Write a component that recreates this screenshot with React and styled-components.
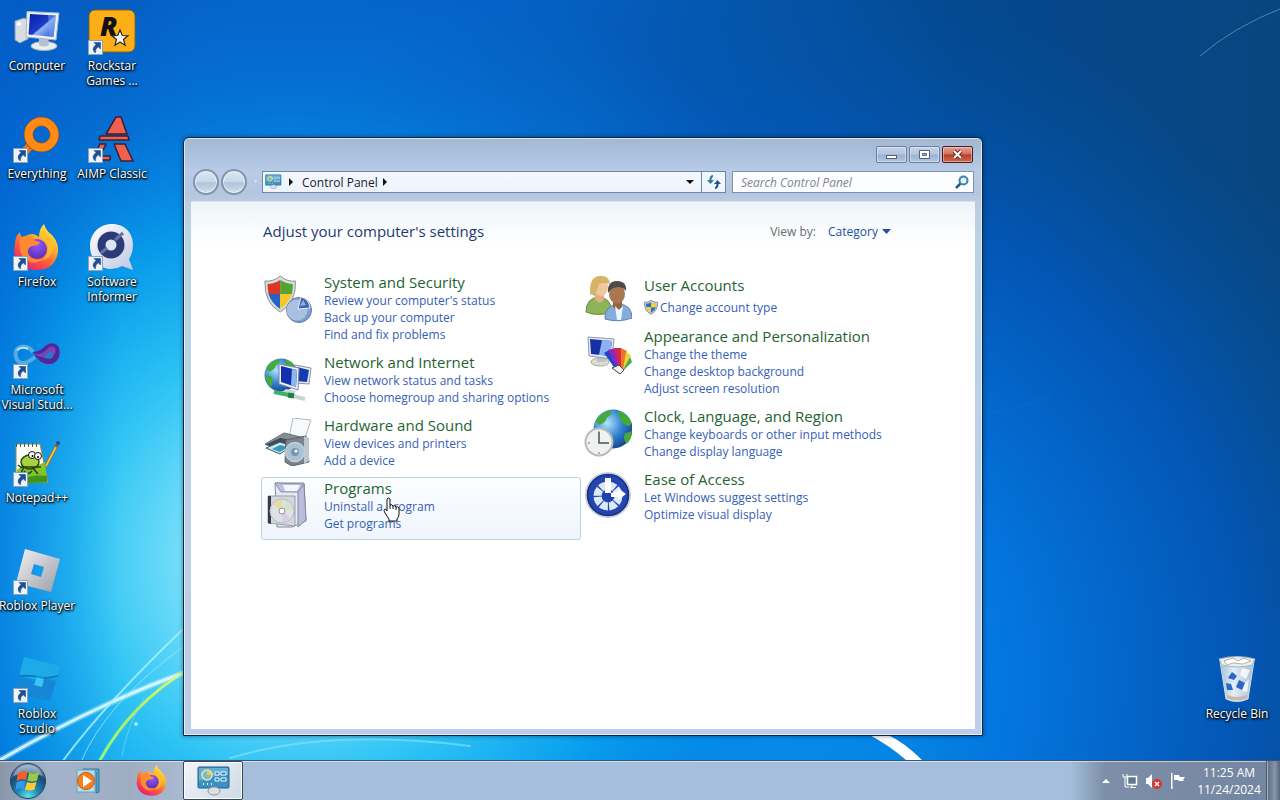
import React, { useState } from 'react';
import styled, { createGlobalStyle, css } from 'styled-components';

const GlobalStyle = createGlobalStyle`
    * {
        box-sizing: border-box;
    }
    body {
        margin: 0;
        font-family: 'Open Sans', 'Noto Sans', sans-serif;
        font-size: 12px;
        line-height: 17px;
    }
    button, input, select {
        font: inherit;
        color: inherit;
        margin: 0;
        padding: 0;
        border: 0;
        background: none;
    }
    a {
        color: inherit;
        text-decoration: none;
    }
`;

/* ---------- desktop ---------- */

const Screen = styled.div`
    min-height: 100vh;
    display: flex;
    flex-direction: column;
    background: #0563cb;
`;

const Desktop = styled.main`
    position: relative;
    flex: 1;
    display: flex;
    justify-content: space-between;
    overflow: hidden;
`;

const Wallpaper = styled.svg`
    position: absolute;
    inset: 0;
    width: 100%;
    height: 100%;
`;

const IconGrid = styled.div`
    position: relative;
    display: grid;
    grid-auto-flow: column;
    grid-template-rows: repeat(7, 108px);
    grid-auto-columns: 74px;
    column-gap: 1px;
    padding-right: ${(p) => (p.$end ? '6px' : '0')};
`;

const Shortcut = styled.button`
    display: flex;
    flex-direction: column;
    align-items: center;
    gap: 2px;
    padding-top: 8px;
    ${(p) => p.$last && css`grid-row: 7;`}
`;

const ShortcutPicture = styled.span`
    position: relative;
    width: 48px;
    height: 48px;
    svg {
        display: block;
    }
`;

const ArrowBadge = styled.svg`
    position: absolute;
    left: 0;
    bottom: 0;
`;

const ShortcutLabel = styled.span`
    color: #fff;
    line-height: 15px;
    white-space: pre;
    text-align: center;
    text-shadow: 0 1px 2px #000, 1px 1px 2px #000, 0 0 3px rgba(0, 0, 0, 0.6);
`;

/* ---------- window ---------- */

const Window = styled.section`
    position: absolute;
    inset: 137px 297px 24px 183px;
    display: flex;
    flex-direction: column;
    padding: 0 7px 6px;
    border: 1px solid #10263f;
    border-radius: 6px 6px 0 0;
    background: linear-gradient(#a3b8d2, #a8c0dc 14px, #b9cbe6 34px, #b3c6e0 56px, #bccce4 64px, #b9d3e6 100px, #bccdea);
    box-shadow: inset 0 0 0 1px rgba(255, 255, 255, 0.65), 0 0 4px rgba(0, 20, 60, 0.5);
`;

const TitleBar = styled.header`
    display: flex;
    justify-content: flex-end;
    gap: 2px;
    height: 33px;
    padding: 8px 2px 0 0;
`;

const CaptionButton = styled.button`
    display: grid;
    place-items: center;
    width: 31px;
    height: 17px;
    border: 1px solid ${(p) => (p.$close ? '#4a1a20' : '#6b7f9e')};
    border-radius: 2px;
    background: ${(p) => (p.$close
        ? 'linear-gradient(#e3a293, #d0705c 48%, #b93a25 52%, #d4694e)'
        : 'linear-gradient(#c3d3e8, #b4c7e0 48%, #9cb1ce 52%, #b3c7e2)')};
    box-shadow: inset 0 0 0 1px rgba(255, 255, 255, 0.4);
`;

const NavRow = styled.div`
    display: flex;
    align-items: center;
    height: 22px;
    margin-bottom: 8px;
    padding: 0 1px 0 2px;
`;

const History = styled.div`
    display: flex;
    align-items: center;
    gap: 2px;
    width: 69px;
`;

const RoundButton = styled.button`
    width: 26px;
    height: 26px;
    border: 2px solid #8193ad;
    border-radius: 50%;
    background: linear-gradient(#dbe7f2, #c9d8e8 48%, #b1c4d9 54%, #cfdfee);
    box-shadow: inset 0 0 0 1px rgba(255, 255, 255, 0.6);
`;

const RecentPages = styled.button`
    display: grid;
    place-items: center;
    width: 12px;
    height: 12px;
`;

const AddressBar = styled.nav`
    flex: 1;
    display: flex;
    align-items: stretch;
    height: 22px;
    margin-right: 6px;
    border: 1px solid #6f88a6;
    background: linear-gradient(#f2f9fd, #eef3fb);
    color: #1c1c2c;
`;

const AddressButton = styled.button`
    display: grid;
    place-items: center;
    width: ${(p) => p.$width || 16}px;
    ${(p) => p.$divided && css`border-left: 1px solid #6f88a6;`}
`;

const Crumb = styled.a`
    display: flex;
    align-items: center;
    padding: 0 2px 0 3px;
`;

const Spacer = styled.span`
    flex: 1;
`;

const SearchBox = styled.form`
    display: flex;
    align-items: center;
    width: 242px;
    height: 22px;
    padding: 0 4px 0 8px;
    border: 1px solid #7c92ae;
    background: #fcfdff;
    input {
        flex: 1;
        min-width: 0;
        outline: 0;
        color: #333;
    }
    input::placeholder {
        color: #858589;
        font-style: italic;
        opacity: 1;
    }
    button {
        display: grid;
    }
`;

const Client = styled.div`
    flex: 1;
    overflow: auto;
    padding: 19px 20px 20px 70px;
    border-top: 1px solid #d6e2ee;
    background: linear-gradient(#edf5f9, #fff 42px);
`;

const ClientHeader = styled.div`
    display: flex;
    justify-content: space-between;
    align-items: center;
    max-width: 640px;
    margin-bottom: 30px;
    padding: 0 10px 0 2px;
`;

const PageTitle = styled.h1`
    margin: 0;
    font-size: 15px;
    font-weight: 400;
    line-height: 20px;
    color: #1f3a73;
`;

const ViewBy = styled.div`
    display: flex;
    align-items: center;
    color: #6d6d6d;
    select {
        appearance: none;
        margin-left: 12px;
        color: #1f4fa8;
        outline: 0;
    }
    svg {
        margin-left: 4px;
    }
`;

const Columns = styled.div`
    display: grid;
    grid-template-columns: repeat(2, minmax(0, 320px));
    align-items: start;
`;

const CategoryBox = styled.article`
    display: flex;
    gap: 12px;
    padding: 0 2px ${(p) => (p.$single ? 5 : 7)}px;
    border: 1px solid ${(p) => (p.$active ? '#b9d2dd' : 'transparent')};
    border-radius: 3px;
    background: ${(p) => (p.$active ? 'linear-gradient(#fcfeff, #eff5fc)' : 'none')};
`;

const CategoryIcon = styled.svg`
    flex: none;
    width: 48px;
    height: 48px;
    margin-top: 3px;
    margin-bottom: -5px;
`;

const CategoryText = styled.div`
    padding-top: ${(p) => (p.$single ? 3 : 0)}px;
    h2 {
        margin: 0;
        font-size: 15px;
        font-weight: 400;
        line-height: 20px;
        color: #1e6430;
    }
    ul {
        margin: 0;
        padding: 0;
        list-style: none;
        color: #3560b8;
    }
    li {
        display: flex;
        align-items: center;
        gap: 2px;
        height: ${(p) => (p.$single ? 24 : 17)}px;
        white-space: nowrap;
    }
`;

const Pointer = styled.svg`
    position: absolute;
    left: 383px;
    top: 497px;
    pointer-events: none;
`;

/* ---------- taskbar ---------- */

const Taskbar = styled.footer`
    position: relative;
    display: flex;
    align-items: stretch;
    height: 40px;
    border-top: 1px solid #35557a;
    background: linear-gradient(90deg, #8996aa, #a3b4ca 50px, #9fadc3 130px, #a8b9d0 180px, #a5bfdd 260px, #a4bedb calc(100% - 210px), #7c8ea8 calc(100% - 175px), #7385a0);
    box-shadow: inset 0 1px 0 rgba(255, 255, 255, 0.55);
`;

const TaskButton = styled.button`
    display: grid;
    place-items: center;
    width: ${(p) => p.$width || 63}px;
    ${(p) => p.$active && css`
        width: 60px;
        border: 1px solid #33475f;
        border-radius: 2px;
        background: linear-gradient(135deg, #f2f5f8, #cdd9e6);
        box-shadow: inset 0 0 0 1px #fff;
    `}
`;

const Tray = styled.div`
    display: flex;
    align-items: center;
    gap: 8px;
    margin-left: auto;
    button {
        display: grid;
        place-items: center;
        width: 16px;
    }
`;

const Clock = styled.time`
    width: 70px;
    color: #fff;
    text-align: center;
    white-space: pre;
`;

const ShowDesktop = styled.button`
    width: 14px;
    margin-left: 2px;
    border-left: 1px solid #4c5a6e;
    background: linear-gradient(90deg, #5d6b80, #8795a9 60%, #56657a);
    box-shadow: inset 1px 0 0 rgba(255, 255, 255, 0.45);
`;

/* ---------- drawings ---------- */

const Background = () => (
    <Wallpaper viewBox="0 0 1280 760" preserveAspectRatio="none" aria-hidden="true">
        <defs>
            <linearGradient id="sky" x1="0" y1="0" x2="1" y2="0">
                <stop offset="0" stopColor="#064fb4" />
                <stop offset=".15" stopColor="#0560c6" />
                <stop offset=".45" stopColor="#0560c4" />
                <stop offset=".75" stopColor="#04488f" />
                <stop offset="1" stopColor="#08467f" />
            </linearGradient>
            <radialGradient id="glow" gradientUnits="userSpaceOnUse" cx="300" cy="560" r="620">
                <stop offset="0" stopColor="#b5f2fc" />
                <stop offset=".2" stopColor="#6fdcf8" />
                <stop offset=".35" stopColor="#2fc4f5" />
                <stop offset=".55" stopColor="#08a0ee" stopOpacity=".92" />
                <stop offset=".75" stopColor="#0480e2" stopOpacity=".55" />
                <stop offset="1" stopColor="#0570d8" stopOpacity="0" />
            </radialGradient>
            <radialGradient id="mid" gradientUnits="userSpaceOnUse" cx="740" cy="680" r="720">
                <stop offset="0" stopColor="#079df2" />
                <stop offset=".4" stopColor="#0376e0" stopOpacity=".95" />
                <stop offset=".7" stopColor="#0359bd" stopOpacity=".85" />
                <stop offset="1" stopColor="#04529f" stopOpacity="0" />
            </radialGradient>
            <linearGradient id="edge" x1="0" x2="1">
                <stop offset="0" stopColor="#0068d8" stopOpacity=".55" />
                <stop offset="1" stopColor="#0078e0" stopOpacity="0" />
            </linearGradient>
            <linearGradient id="green" x1="0" y1="1" x2="1" y2="0">
                <stop offset="0" stopColor="#8dfa83" />
                <stop offset=".5" stopColor="#b7ee58" />
                <stop offset="1" stopColor="#d9fa9a" />
            </linearGradient>
        </defs>
        <path fill="url(#sky)" d="M0 0h1280v760H0z" />
        <path fill="url(#mid)" d="M0 0h1280v760H0z" />
        <path fill="url(#glow)" d="M0 0h1280v760H0z" />
        <path fill="url(#edge)" d="M0 0h120v760H0z" />
        <g fill="none" strokeLinecap="round">
            <path d="M0 760Q55 728 110 703T200 668" stroke="#b9f2ff" strokeWidth="6" opacity=".4" />
            <path d="M0 760Q55 728 110 703T200 668" stroke="#e8fcff" strokeWidth="3" opacity=".85" />
            <path d="M62 762Q105 704 182 630" stroke="#a9f2ff" strokeWidth="2" opacity=".8" />
            <path d="M81 762Q105 704 184 646" stroke="#9aeafc" strokeWidth="1" opacity=".8" />
            <path d="M99 762Q130 704 190 668" stroke="url(#green)" strokeWidth="3" />
            <path d="M122 756q5-30 22-58" stroke="#7fdcf8" opacity=".6" />
            <path d="M230 758Q330 728 470 746" stroke="#8be4f8" strokeWidth="2" opacity=".6" />
            <path d="M1200 56Q1232 28 1282 8" stroke="#5c93b8" strokeWidth="1" opacity=".8" />
            <path d="M988 414Q1020 410 1050 394" stroke="#118ff0" strokeWidth="2" opacity=".12" />
        </g>
        <path d="M868 734l18 0q18 8 36 26h-16Q890 746 868 734z" fill="#fff" />
        <circle cx="136" cy="724" r="2" fill="#9becff" />
    </Wallpaper>
);

const LinkArrow = () => (
    <ArrowBadge width="16" height="16" viewBox="0 0 16 16">
        <path d="M.5.5h14v14H.5z" fill="#eef4fa" stroke="#8aa4bf" />
        <path d="M6 2.500h6.500v6.500l-2.200-2.200Q7 9 7.400 13 2.500 9.500 8 4.500z" fill="#1c4f96" stroke="#133a75" strokeWidth=".5" />
    </ArrowBadge>
);

const ComputerIcon = () => (
    <svg width="48" height="48" viewBox="0 0 48 48">
        <defs>
            <linearGradient id="pcScreen" x1="0" x2="1" y1="0" y2="1">
                <stop offset="0" stopColor="#0a1cab" />
                <stop offset=".5" stopColor="#1c3cc4" />
                <stop offset=".55" stopColor="#8eb5f4" />
                <stop offset="1" stopColor="#2148cd" />
            </linearGradient>
        </defs>
        <path d="M2 13l9-3 4 2v19l-8 4-5-3z" fill="#d7dde3" stroke="#8b97a8" />
        <path d="M4 15l4-1v3l-4 1z" fill="#fff" />
        <ellipse cx="31" cy="38" rx="13" ry="4.500" fill="#e8edf0" stroke="#a2adb8" />
        <path d="M26 28h9l1 9q-5 3-10 0z" fill="#b5c1cc" />
        <path d="M14 3.500l32 1.500-3 27-30-3z" fill="#eef2f5" stroke="#a4b4c6" />
        <path d="M17 6l26 1.500-2.500 21.500-25-2.500z" fill="url(#pcScreen)" />
        <path d="M35 7l8 .5-2.500 21.500-4-.5z" fill="#7ba6f3" opacity=".5" />
    </svg>
);

const RockstarIcon = () => (
    <svg width="48" height="48" viewBox="0 0 48 48">
        <rect x="1" y="2" width="46" height="42" rx="6" fill="#fcaf17" stroke="#8a640e" />
        <text x="12" y="28" fontFamily="Open Sans, sans-serif" fontWeight="800" fontStyle="italic" fontSize="27" fill="#111">R</text>
        <path d="M32 22l2.200 5.500 5.800.3-4.500 3.700 1.600 5.700-5.100-3.200-5 3.200 1.500-5.700-4.500-3.700 5.800-.3z" fill="#fff" stroke="#222" strokeWidth="1.200" />
    </svg>
);

const EverythingIcon = () => (
    <svg width="48" height="48" viewBox="0 0 48 48">
        <path d="M17 30l-9 10" stroke="#e8741a" strokeWidth="8" />
        <circle cx="28.500" cy="18.500" r="13" fill="none" stroke="#94561b" strokeWidth="9.500" />
        <circle cx="28.500" cy="18.500" r="13" fill="none" stroke="#ff8a15" strokeWidth="8" />
    </svg>
);

const AimpIcon = () => (
    <svg width="48" height="48" viewBox="0 0 48 48" fill="#f0604f" stroke="#3a1f30" strokeWidth="1.500" strokeLinejoin="round">
        <path d="M28 1h5l6 17H18z" />
        <path d="M12 20h28l1 4H11z" />
        <path d="M26 28h11l8 17H33z" />
        <path d="M12 28h6l-6 12h10v4H4z" />
    </svg>
);

const FirefoxIcon = ({ size = 48, id }) => (
    <svg width={size} height={size} viewBox="0 0 48 48">
        <defs>
            <linearGradient id={`${id}Flame`} x1=".85" y1="0" x2=".2" y2="1">
                <stop offset="0" stopColor="#fff14c" />
                <stop offset=".35" stopColor="#ffb02b" />
                <stop offset=".65" stopColor="#ff5a3c" />
                <stop offset="1" stopColor="#e5147e" />
            </linearGradient>
            <radialGradient id={`${id}Globe`} cx=".5" cy=".3" r=".7">
                <stop offset="0" stopColor="#9059ff" />
                <stop offset="1" stopColor="#5b2fb4" />
            </radialGradient>
        </defs>
        <path d="M2 19Q2 13 7 8q0 4 3 6 4-4 10-4 4 1 6 3 0-8 5-13 2 7 8 11 7 8 6 17-3 18-21 18Q4 46 1 28z" fill={`url(#${id}Flame)`} />
        <circle cx="24" cy="25" r="10" fill={`url(#${id}Globe)`} />
        <path d="M7 14q6-4 12-1 1 4 8 5 0 3-8 4-5 2-4 7 2 8 14 6-8 8-18-1Q5 27 7 14z" fill="#ff8a33" />
        <path d="M28 13q8 4 7 12-1 10-10 12 15-1 15-15 0-9-11-16-3 3-1 7z" fill="#ffc02f" opacity=".8" />
    </svg>
);

const InformerIcon = () => (
    <svg width="48" height="48" viewBox="0 0 48 48">
        <defs>
            <linearGradient id="infoBody" x1="0" y1="0" x2="1" y2="1">
                <stop offset="0" stopColor="#fff" />
                <stop offset="1" stopColor="#bfc9e3" />
            </linearGradient>
        </defs>
        <path d="M24 0C37 0 45 9 45 21q0 8-4 14l4 11-11-4q-5 3-11 3C10 45 2 34 2 22S11 0 24 0z" fill="url(#infoBody)" />
        <circle cx="23" cy="21" r="9.500" fill="#dce5f7" stroke="#2c3a78" strokeWidth="8" />
        <path d="M13 29l6-5M27 16l8-7" stroke="#6273ac" strokeWidth="3" />
    </svg>
);

const VisualStudioIcon = () => (
    <svg width="48" height="48" viewBox="0 0 48 48" fill="none">
        <path d="M20 20Q15 13 8 15q-7 2-5 10 2 7 8 6 5-1 11-6" stroke="#5fb0dc" strokeWidth="4" opacity=".9" />
        <path d="M4 18q5-4 11-1" stroke="#b7e3f3" strokeWidth="2" />
        <path d="M20 20q9-1 12-6 6-5 12-1 4 4 2 12-3 8-12 7-8-1-14-12z" fill="#54249a" />
        <path d="M20 21q7 3 12-2 6-7 10-3 3 7-6 9-8 2-16-4z" fill="#7545b8" />
        <path d="M31 26q3-7 8-6 4 5-2 7z" fill="#2b78c8" />
    </svg>
);

const NotepadIcon = () => (
    <svg width="48" height="48" viewBox="0 0 48 48">
        <path d="M3 4h24l8 38-32 2z" fill="#fbfdf5" stroke="#84924f" />
        <path d="M4 30q9-8 17-3l11-5 2 20-31 2z" fill="#83c32b" />
        <path d="M7 41q11-7 27-5v6L7 44z" fill="#3f951d" />
        <path d="M3 5h24" stroke="#4d5a60" strokeWidth="4" strokeDasharray="1 3" />
        <ellipse cx="17" cy="22" rx="9" ry="7" fill="#a7d13d" stroke="#2c4910" strokeWidth="1.500" />
        <path d="M7 27h21M11 27l-3 6M19 27l6 7M11 31q4 5 8 0M5 25l4 3" stroke="#26400e" strokeWidth="1.500" fill="none" />
        <circle cx="19" cy="15" r="3.500" fill="#fff" stroke="#111" />
        <circle cx="25" cy="16" r="3.500" fill="#fff" stroke="#111" />
        <circle cx="19.500" cy="16" r="1" /><circle cx="25" cy="17" r="1" />
        <path d="M33 26L44 5" stroke="#8a5b10" strokeWidth="3" />
        <path d="M33 26L43 7" stroke="#f9c22e" strokeWidth="2" />
        <circle cx="45" cy="3" r="2" fill="#2e4a8c" />
    </svg>
);

const RobloxIcon = () => (
    <svg width="48" height="48" viewBox="0 0 48 48">
        <defs>
            <linearGradient id="roblox" x1="0" y1="0" x2="1" y2="1">
                <stop offset="0" stopColor="#f4f4f6" />
                <stop offset="1" stopColor="#9a9ca6" />
            </linearGradient>
        </defs>
        <path fillRule="evenodd" fill="url(#roblox)" d="M12 1l35 10-9 33L3 35zM21 16l-3 10 10 3 3-10z" />
    </svg>
);

const StudioIcon = () => (
    <svg width="48" height="48" viewBox="0 0 48 48">
        <path d="M11 1l36 9-3 12-17-2-2 4L6 20z" fill="#1cabe6" />
        <path d="M6 22l20 5 2-5 15 3-6 20L3 37z" fill="#1787d5" />
        <path d="M6 20q20-1 22 3l17-3" stroke="#0b72b8" strokeWidth="1.500" fill="none" />
        <path d="M24 21l7 2-2 8-8-2z" fill="#3cc4f2" />
    </svg>
);

const RecycleIcon = () => (
    <svg width="48" height="48" viewBox="0 0 48 48">
        <defs>
            <linearGradient id="bin" x1="0" x2="1">
                <stop offset="0" stopColor="#aec5dc" />
                <stop offset=".4" stopColor="#f0f6fa" />
                <stop offset="1" stopColor="#b0c2d4" />
            </linearGradient>
        </defs>
        <path d="M7 5h34l-6 38q-11 5-22 0z" fill="url(#bin)" stroke="#dbe6ee" opacity=".95" />
        <path d="M6 3q18-5 36 0l-3 6q-15 4-30 0z" fill="#e9f0f4" stroke="#9fb4c6" />
        <path d="M11 5l9-3 5 3 6-3 7 3-8 3-10-1-6 2z" fill="#fff" stroke="#a58f7c" strokeWidth=".7" />
        <path d="M29 12l8 2-4 9-6-4zM31 28l5-5-2 13-5-1z" fill="#fff" opacity=".8" />
        <path d="M15 22l4-6 5 4-3 4zM26 24l6 3-3 7-6-3zM13 27l5 1 2 6-6 0z" fill="#2d66c9" />
        <path d="M14 39q10 4 20 0v3q-10 5-20 0z" fill="#c9b8a8" />
    </svg>
);

const ShieldPaths = () => (
    <>
        <path d="M18 0Q10 6 1 5q-1 22 17 31Q36 27 35 5 26 6 18 0z" fill="#d4dade" stroke="#888f96" />
        <path d="M18 4Q11 8 4 8q0 5 1 10h13z" fill="#da3626" />
        <path d="M18 4q7 4 14 4 0 5-1 10H18z" fill="#52a42e" />
        <path d="M5 18h13v15Q8 27 5 18z" fill="#2463c4" />
        <path d="M31 18H18v15q10-6 13-15z" fill="#f6c725" />
    </>
);

const SecurityIcon = () => (
    <>
        <g transform="translate(0 1) scale(.9 1)"><ShieldPaths /></g>
        <circle cx="35" cy="35" r="12.500" fill="#7f9dcb" stroke="#5e7aaa" />
        <circle cx="33" cy="35" r="10.500" fill="#a9c1e1" />
        <path d="M34 34l3-12q8 2 9 11z" fill="#3b64b0" stroke="#e5eefa" />
        <path d="M36 31l3-6 3 5z" fill="#8db0e0" />
    </>
);

const Globe = ({ x, y, r, id }) => (
    <g>
        <defs>
            <radialGradient id={id} cx=".35" cy=".35" r=".8">
                <stop offset="0" stopColor="#b3e2fa" />
                <stop offset=".5" stopColor="#2f82cf" />
                <stop offset="1" stopColor="#0d3278" />
            </radialGradient>
        </defs>
        <circle cx={x} cy={y} r={r} fill={`url(#${id})`} />
        <g transform={`translate(${x} ${y}) scale(${r / 20})`} fill="#45aa3c">
            <path d="M-18-8Q-12-18-2-19q2 4-4 7-2 6-8 8zM-19 0q8 0 9 5 0 6-2 10-6-5-7-15z" />
            <path d="M5-19q9 2 14 12-1 6-6 3-7-4-8-15zM19 2q1 9-5 13-4-4-2-10z" />
        </g>
    </g>
);

const NetworkIcon = () => (
    <>
        <Globe x={17} y={20} r={16.500} id="netGlobe" />
        <path d="M31 10l16 3-2 16-14-1z" fill="#e6edf4" stroke="#8491a4" />
        <path d="M33 12l12 3-2 12-11-1z" fill="#173bb2" />
        <path d="M15 9l20 4-1 22-19-6z" fill="#edf3f8" stroke="#7b899a" />
        <path d="M17 11l16 4-1 17-15-5z" fill="#142fae" />
        <path d="M28 14l5 1-1 17-5-2z" fill="#8eb4f2" />
        <path d="M22 34l-4 3 12 2 2-3z" fill="#ccd5dc" />
        <path d="M10 37l20 4" stroke="#3cb066" strokeWidth="4" />
        <path d="M28 41l13 3" stroke="#c7d5cf" strokeWidth="4" />
        <path d="M24 40l6 1" stroke="#16823c" strokeWidth="5" />
    </>
);

const HardwareIcon = () => (
    <>
        <path d="M29 0l18 2-7 21-15-4z" fill="#f7fafb" stroke="#b3b9be" />
        <path d="M1 26l19-11 25 6-10 15z" fill="#858c93" stroke="#6b7178" />
        <path d="M1 27l18 4 13-8-16-3z" fill="#454b52" />
        <path d="M2 30l14-6 12 4-12 8z" fill="#c2edf4" stroke="#456" />
        <path d="M8 31l8-4 8 2-8 5z" fill="#3c93bb" />
        <path d="M22 22l20-4 3 26-17 4-7-4z" fill="#7b848d" stroke="#5b6168" />
        <path d="M40 18l5 3v22l-5 3z" fill="#c0c6cc" />
        <circle cx="31" cy="34" r="9.500" fill="#a7c4d6" stroke="#c6ced4" strokeWidth="1.500" />
        <circle cx="31" cy="34" r="4" fill="#7796ac" />
        <circle cx="32" cy="33" r="1.500" fill="#fff" />
    </>
);

const ProgramsIcon = () => (
    <>
        <path d="M11 2h29l2 38-14 6H13z" fill="#e5e8f6" stroke="#87899f" />
        <path d="M11 2l6 9h18l5-8z" fill="#bcbfe0" stroke="#8f91ab" />
        <path d="M19 4h17l-3 6H21z" fill="#f5f5fc" />
        <path d="M34 11l6-8 2 36-8 7z" fill="#b8bddc" stroke="#8486a0" />
        <path d="M4 15h27v30L4 42z" fill="#d3d8dc" stroke="#9aa0a6" />
        <path d="M4 15h3v28l-3-1z" fill="#363a42" />
        <circle cx="18" cy="30" r="12" fill="#dfe2e4" stroke="#b4b8bd" />
        <path d="M18 30l-9-6q4-5 9-5.500z" fill="#ead9a0" />
        <path d="M18 30l9 7q-4 4-9 4z" fill="#dccde4" />
        <path d="M18 30l5-10q5 2 6 8z" fill="#d3e2c8" />
        <circle cx="18" cy="30" r="3" fill="#fff" stroke="#8e9298" />
    </>
);

const UsersIcon = () => (
    <>
        <path d="M2 37q0-14 13-15 12 1 13 15-14 5-26 0z" fill="#8db457" stroke="#66883c" />
        <path d="M11 16h9v9l-4 3-5-3z" fill="#e0b082" />
        <ellipse cx="17" cy="12" rx="7" ry="9" fill="#efc79c" />
        <path d="M6 19Q5 1 16 1q9-1 10 8-6-2-11 0-3 8-4 12z" fill="#d7b368" />
        <path d="M21 44q-1-14 14-15 13 1 13 14-14 5-27 1z" fill="#85addc" stroke="#5a80b0" />
        <path d="M29 24h9v8l-4 4-5-4z" fill="#966641" />
        <path d="M31 31l4 4 4-4-2 14h-4z" fill="#eef4fb" />
        <ellipse cx="33" cy="19" rx="8" ry="9.500" fill="#a97853" />
        <path d="M24 18Q23 6 33 6q10 0 9 10-3-4-8-4-6 0-10 6z" fill="#4c4b49" />
    </>
);

const AppearanceIcon = () => (
    <>
        <ellipse cx="16" cy="33" rx="9" ry="4" fill="#dadfcf" stroke="#a2a997" />
        <path d="M13 26h8l1 7h-9z" fill="#b9c2cc" />
        <path d="M4 8l26 2-2 20-23-3z" fill="#e7edf2" stroke="#8c99a6" />
        <path d="M6 10l22 2-2 15-19-2z" fill="#1630a8" />
        <path d="M18 11l10 1-2 15-11-1z" fill="#8bb2ef" />
        <path d="M20 24l5-3 13 20-4 3z" fill="#2342c9" />
        <path d="M24 21l7-2 7 22-3 2z" fill="#862bbb" />
        <path d="M30 19h7l2 22-3 1z" fill="#d7264d" />
        <path d="M37 19l6 3-4 20-2-1z" fill="#ee7424" />
        <path d="M42 22l5 5-8 15z" fill="#e9d437" />
        <path d="M46 28l2 5-10 10z" fill="#46ac44" />
        <path d="M28 39l7-3 5 5-4 4z" fill="#f4f4f4" stroke="#444" />
    </>
);

const RegionIcon = () => (
    <>
        <Globe x={29} y={20} r={19.500} id="regionGlobe" />
        <circle cx="15" cy="33" r="13.500" fill="#f0f2f2" stroke="#b6bbbe" strokeWidth="2" />
        <path d="M15 23v11h10" stroke="#4a5258" strokeWidth="1.500" fill="none" />
        <path d="M15 22v2M15 43v2M4 34h2" stroke="#727a80" />
    </>
);

const AccessIcon = () => (
    <>
        <circle cx="24" cy="23" r="22" fill="#2546b0" stroke="#c9cfda" strokeWidth="2" />
        <circle cx="24" cy="23" r="20.500" fill="none" stroke="#17307f" strokeWidth="1.500" />
        <circle cx="24" cy="24" r="10.500" fill="none" stroke="#dbe9f8" strokeWidth="8" strokeDasharray="7 1.250" />
        <circle cx="24" cy="24" r="5" fill="#1b43ad" />
        <path d="M21 6h6v15h-6zM27 21l7-2v-3l8 6-8 6v-3h-7z" fill="#fff" />
    </>
);

const PanelPaths = () => (
    <>
        <rect x="1" y="1" width="31" height="21" rx="1" fill="#3b91c4" stroke="#225f8c" />
        <path d="M2 2h29v7Q16 9 2 15z" fill="#8bcdea" opacity=".5" />
        <circle cx="10" cy="9" r="5" fill="#81b7cb" stroke="#e4eba0" strokeWidth="1.500" />
        <path d="M10 9V4.500q4 .5 4.500 4.500z" fill="#e8ce4c" />
        <path d="M18 6h4v3h-4zM24 6h5v3h-5zM18 12h4v3h-4zM24 12h5v3h-5z" fill="#2d7fb4" stroke="#eefaff" />
        <path d="M6 18h1M10 18h1M14 18h1" stroke="#d9f2ff" strokeWidth="2" />
        <ellipse cx="17" cy="25" rx="6" ry="4" fill="#dce0e2" stroke="#8c949a" />
    </>
);

const StartOrb = () => (
    <svg width="38" height="38" viewBox="0 0 38 38">
        <defs>
            <radialGradient id="orb" cx=".5" cy=".95" r=".95">
                <stop offset="0" stopColor="#5be8ee" />
                <stop offset=".35" stopColor="#1c83ae" />
                <stop offset=".7" stopColor="#1b4a75" />
                <stop offset="1" stopColor="#8ea9c0" />
            </radialGradient>
        </defs>
        <circle cx="19" cy="19" r="17.500" fill="url(#orb)" stroke="#22415f" />
        <path d="M4 14Q9 3 19 3t15 11q-14-6-30 0z" fill="#fff" opacity=".35" />
        <path d="M9 11q5-3 9.500-1l-1.500 8q-5-2-9.500 1z" fill="#f0602b" />
        <path d="M20 10.500q4 2 10 0l-2 8q-5 2-9.500 0z" fill="#97ce3f" />
        <path d="M7.500 20.500q4.500-3 9-1l-2 7.500q-4-2-8 1z" fill="#2f9bea" />
        <path d="M18 20q4 2 9.500 0l-2 7.500q-5 2-9.500 0z" fill="#fbcb35" />
    </svg>
);

const PlayerIcon = () => (
    <svg width="28" height="28" viewBox="0 0 28 28">
        <path d="M9 2h16v23l-3 1V5H9z" fill="#4aa3cf" stroke="#2b769f" />
        <path d="M3 3h18v22H3z" fill="#b5dcec" stroke="#6ba4bf" />
        <circle cx="12" cy="14" r="8.500" fill="#f37f1f" stroke="#c85b10" />
        <path d="M9 8l9 6-9 6z" fill="#fff" />
    </svg>
);

const shortcuts = [
    { label: 'Computer', icon: <ComputerIcon />, plain: true },
    { label: 'Everything', icon: <EverythingIcon /> },
    { label: 'Firefox', icon: <FirefoxIcon id="deskFox" /> },
    { label: 'Microsoft\nVisual Stud...', icon: <VisualStudioIcon /> },
    { label: 'Notepad++', icon: <NotepadIcon /> },
    { label: 'Roblox Player', icon: <RobloxIcon /> },
    { label: 'Roblox\nStudio', icon: <StudioIcon /> },
    { label: 'Rockstar\nGames ...', icon: <RockstarIcon /> },
    { label: 'AIMP Classic', icon: <AimpIcon /> },
    { label: 'Software\nInformer', icon: <InformerIcon /> },
];

const leftCategories = [
    {
        title: 'System and Security',
        icon: <SecurityIcon />,
        links: ["Review your computer's status", 'Back up your computer', 'Find and fix problems'],
    },
    {
        title: 'Network and Internet',
        icon: <NetworkIcon />,
        links: ['View network status and tasks', 'Choose homegroup and sharing options'],
    },
    {
        title: 'Hardware and Sound',
        icon: <HardwareIcon />,
        links: ['View devices and printers', 'Add a device'],
    },
    {
        title: 'Programs',
        icon: <ProgramsIcon />,
        links: ['Uninstall a program', 'Get programs'],
    },
];

const rightCategories = [
    { title: 'User Accounts', icon: <UsersIcon />, links: ['Change account type'], shield: true },
    {
        title: 'Appearance and Personalization',
        icon: <AppearanceIcon />,
        links: ['Change the theme', 'Change desktop background', 'Adjust screen resolution'],
    },
    {
        title: 'Clock, Language, and Region',
        icon: <RegionIcon />,
        links: ['Change keyboards or other input methods', 'Change display language'],
    },
    {
        title: 'Ease of Access',
        icon: <AccessIcon />,
        links: ['Let Windows suggest settings', 'Optimize visual display'],
    },
];

const DesktopShortcut = ({ item, last }) => (
    <Shortcut type="button" $last={last}>
        <ShortcutPicture>
            {item.icon}
            {!item.plain && <LinkArrow />}
        </ShortcutPicture>
        <ShortcutLabel>{item.label}</ShortcutLabel>
    </Shortcut>
);

const Category = ({ item, active, onHover }) => (
    <CategoryBox $single={item.shield} $active={active} onMouseEnter={() => onHover(item.title)}>
        <CategoryIcon viewBox="0 0 48 48" aria-hidden="true">{item.icon}</CategoryIcon>
        <CategoryText $single={item.shield}>
            <h2><a href="#category">{item.title}</a></h2>
            <ul>
                {item.links.map((link) => (
                    <li key={link}>
                        {item.shield && (
                            <svg width="14" height="15" viewBox="0 0 36 37">
                                <path d="M18 0Q10 6 1 5q-1 22 17 31Q36 27 35 5 26 6 18 0z" fill="#c3ccd2" stroke="#77838d" strokeWidth="2" />
                                <path d="M18 5Q11 9 5 9q0 5 1 9h12zM31 18H18v14q10-5 13-14z" fill="#2b6fce" />
                                <path d="M18 5q7 4 13 4 0 5-1 9H18zM5 18h13v14Q8 27 5 18z" fill="#f3cf3a" />
                            </svg>
                        )}
                        <a href="#task">{link}</a>
                    </li>
                ))}
            </ul>
        </CategoryText>
    </CategoryBox>
);

const ControlPanel = () => {
    const [hovered, setHovered] = useState('Programs');
    const renderCategory = (item) => (
        <Category key={item.title} item={item} active={item.title === hovered} onHover={setHovered} />
    );

    return (
        <Window aria-label="Control Panel">
            <TitleBar>
                <CaptionButton type="button" aria-label="Minimize">
                    <svg width="13" height="11" viewBox="0 0 13 11">
                        <rect x="1.500" y="6.500" width="10" height="3" fill="#fff" stroke="#53627a" />
                    </svg>
                </CaptionButton>
                <CaptionButton type="button" aria-label="Maximize">
                    <svg width="13" height="11" viewBox="0 0 13 11">
                        <path fillRule="evenodd" d="M1.500 1.500h10v8h-10zM4.500 4.500h4v2h-4z" fill="#fff" stroke="#53627a" />
                    </svg>
                </CaptionButton>
                <CaptionButton type="button" aria-label="Close" $close>
                    <svg width="13" height="11" viewBox="0 0 13 11">
                        <path d="M3 2l7 7M10 2L3 9" stroke="#6b2a2a" strokeWidth="4" />
                        <path d="M3 2l7 7M10 2L3 9" stroke="#fff" strokeWidth="2" />
                    </svg>
                </CaptionButton>
            </TitleBar>
            <NavRow>
                <History>
                    <RoundButton type="button" aria-label="Back" />
                    <RoundButton type="button" aria-label="Forward" />
                    <RecentPages type="button" aria-label="Recent pages">
                        <svg width="7" height="4" viewBox="0 0 7 4"><path d="M0 0h7L3.500 4z" fill="#d4dff5" stroke="#9aaccf" strokeWidth=".5" /></svg>
                    </RecentPages>
                </History>
                <AddressBar aria-label="Address">
                    <AddressButton type="button" $width={20} aria-label="Location">
                        <svg width="17" height="16" viewBox="0 0 34 31"><PanelPaths /></svg>
                    </AddressButton>
                    <AddressButton type="button" aria-label="Root">
                        <svg width="4" height="8" viewBox="0 0 4 8"><path d="M0 0l4 4-4 4z" fill="#111" /></svg>
                    </AddressButton>
                    <Crumb href="#control-panel">Control Panel</Crumb>
                    <AddressButton type="button" $width={10} aria-label="Control Panel items">
                        <svg width="4" height="8" viewBox="0 0 4 8"><path d="M0 0l4 4-4 4z" fill="#111" /></svg>
                    </AddressButton>
                    <Spacer />
                    <AddressButton type="button" $width={22} aria-label="Previous locations">
                        <svg width="8" height="4" viewBox="0 0 8 4"><path d="M0 0h8L4 4z" fill="#111" /></svg>
                    </AddressButton>
                    <AddressButton type="button" $width={24} $divided aria-label="Refresh">
                        <svg width="14" height="14" viewBox="0 0 14 14" fill="none">
                            <path d="M6 1Q3 1 3.500 7" stroke="#2a7a9e" strokeWidth="2" />
                            <path d="M0 5h7L3.500 9z" fill="#2a7a9e" />
                            <path d="M8 13q3 0 2.500-6" stroke="#27528f" strokeWidth="2" />
                            <path d="M7 9h7l-3.500-4z" fill="#27528f" />
                        </svg>
                    </AddressButton>
                </AddressBar>
                <SearchBox role="search" onSubmit={(e) => e.preventDefault()}>
                    <input type="text" aria-label="Search Control Panel" placeholder="Search Control Panel" />
                    <button type="submit" aria-label="Search">
                        <svg width="14" height="14" viewBox="0 0 14 14" fill="none">
                            <path d="M1 13l5-5" stroke="#245c88" strokeWidth="2.500" />
                            <circle cx="8.500" cy="5.500" r="4" stroke="#3485ac" strokeWidth="2" fill="#e8f6fc" />
                        </svg>
                    </button>
                </SearchBox>
            </NavRow>
            <Client>
                <ClientHeader>
                    <PageTitle>Adjust your computer's settings</PageTitle>
                    <ViewBy>
                        <label htmlFor="view-by">View by:</label>
                        <select id="view-by">
                            <option>Category</option>
                        </select>
                        <svg width="9" height="5" viewBox="0 0 9 5"><path d="M0 0h9L4.500 5z" fill="#2450a0" /></svg>
                    </ViewBy>
                </ClientHeader>
                <Columns>
                    <div>{leftCategories.map(renderCategory)}</div>
                    <div>{rightCategories.map(renderCategory)}</div>
                </Columns>
            </Client>
        </Window>
    );
};

const App = () => (
    <Screen>
        <GlobalStyle />
        <Desktop>
            <Background />
            <IconGrid>
                {shortcuts.map((item) => <DesktopShortcut key={item.label} item={item} />)}
            </IconGrid>
            <IconGrid $end>
                <DesktopShortcut item={{ label: 'Recycle Bin', icon: <RecycleIcon />, plain: true }} last />
            </IconGrid>
            <ControlPanel />
            <Pointer width="18" height="25" viewBox="0 0 18 25" aria-hidden="true">
                <path d="M4 2q2-2 3 0v6q2-1 3 1 2-1 3 1 2-1 3 1v6q0 3-2 5v2H6v-2l-4-6q-2-3 0-4 1 0 2 2z" fill="#fff" stroke="#111" />
                <path d="M7 8v4M10 9v3M13 10v3" stroke="#111" />
            </Pointer>
        </Desktop>
        <Taskbar>
            <TaskButton type="button" $width={55} aria-label="Start"><StartOrb /></TaskButton>
            <TaskButton type="button" $width={65} aria-label="Media Player"><PlayerIcon /></TaskButton>
            <TaskButton type="button" aria-label="Firefox"><FirefoxIcon size={32} id="taskFox" /></TaskButton>
            <TaskButton type="button" $active aria-label="Control Panel">
                <svg width="33" height="30" viewBox="0 0 33 30"><PanelPaths /></svg>
            </TaskButton>
            <Tray>
                <button type="button" aria-label="Show hidden icons">
                    <svg width="8" height="4" viewBox="0 0 8 4"><path d="M0 4h8L4 0z" fill="#fff" /></svg>
                </button>
                <button type="button" aria-label="Network">
                    <svg width="16" height="16" viewBox="0 0 16 16" fill="none" stroke="#fff">
                        <path d="M5.500 3.500h9v8h-9z" fill="#62778f" strokeWidth="1.500" />
                        <path d="M1 1v3h4V1M3 4v10h4M8 14.500h6M10 12v2" />
                    </svg>
                </button>
                <button type="button" aria-label="Volume muted">
                    <svg width="16" height="16" viewBox="0 0 16 16">
                        <path d="M0 5h2l4-4v14l-4-4H0z" fill="#fff" />
                        <circle cx="11" cy="11" r="5" fill="#d9332c" />
                        <path d="M9 9l4 4M13 9l-4 4" stroke="#fff" strokeWidth="1.500" />
                    </svg>
                </button>
                <button type="button" aria-label="Action Center">
                    <svg width="16" height="16" viewBox="0 0 16 16">
                        <path d="M1 0h1.500v16H1z" fill="#fff" />
                        <path d="M4 2h5l1 2h5l-2 3 1 1H9L8 7H4z" fill="#fff" />
                    </svg>
                </button>
                <Clock>{'11:25 AM\n11/24/2024'}</Clock>
            </Tray>
            <ShowDesktop type="button" aria-label="Show desktop" />
        </Taskbar>
    </Screen>
);

export default App;
